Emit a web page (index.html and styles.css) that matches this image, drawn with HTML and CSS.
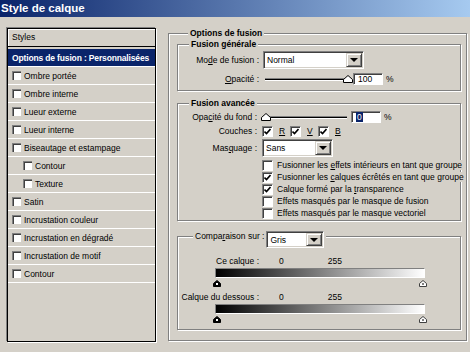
FILE: index.html
```html
<!DOCTYPE html>
<html lang="fr">
<head>
    <meta charset="UTF-8">
    <meta name="viewport" content="width=device-width, initial-scale=1.0">
    <title>Style de calque</title>
    <link rel="stylesheet" href="styles.css">
</head>
<body>
    <div class="titlebar">Style de calque</div>

    <div class="dialog">
        <div class="styles-list">
            <div class="list-head">Styles</div>
            <div class="list-item selected">Options de fusion : Personnalisées</div>
            <div class="list-item"><span class="box"></span>Ombre portée</div>
            <div class="list-item"><span class="box"></span>Ombre interne</div>
            <div class="list-item"><span class="box"></span>Lueur externe</div>
            <div class="list-item"><span class="box"></span>Lueur interne</div>
            <div class="list-item"><span class="box"></span>Biseautage et estampage</div>
            <div class="list-item sub"><span class="box"></span>Contour</div>
            <div class="list-item sub"><span class="box"></span>Texture</div>
            <div class="list-item"><span class="box"></span>Satin</div>
            <div class="list-item"><span class="box"></span>Incrustation couleur</div>
            <div class="list-item"><span class="box"></span>Incrustation en dégradé</div>
            <div class="list-item"><span class="box"></span>Incrustation de motif</div>
            <div class="list-item"><span class="box"></span>Contour</div>
        </div>

        <fieldset class="group outer">
            <legend>Options de fusion</legend>

            <fieldset class="group general">
                <legend>Fusion générale</legend>
                <div class="form-grid">
                    <label>Mo<u>d</u>e de fusion :</label>
                    <div class="select select-mode"><span class="value">Normal</span><span class="drop"></span></div>
                    <label><u>O</u>pacité :</label>
                    <div class="slider-row">
                        <div class="slider">
                            <div class="track"></div>
                            <svg class="thumb" style="left:80px" width="10" height="8" viewBox="0 0 10 8"><path d="M0.5 7.5V4.5L5 0.5L9.5 4.5V7.5Z" fill="#fff" stroke="#000"/></svg>
                        </div>
                        <span class="num">100</span><span class="pct">%</span>
                    </div>
                </div>
            </fieldset>

            <fieldset class="group advanced">
                <legend>Fusion avancée</legend>
                <div class="form-grid narrow">
                    <label>Opa<u>c</u>ité du fond :</label>
                    <div class="slider-row">
                        <div class="slider">
                            <div class="track"></div>
                            <svg class="thumb" style="left:0px" width="10" height="8" viewBox="0 0 10 8"><path d="M0.5 7.5V4.5L5 0.5L9.5 4.5V7.5Z" fill="#fff" stroke="#000"/></svg>
                        </div>
                        <span class="num"><span class="sel">0</span></span><span class="pct">%</span>
                    </div>
                    <label>Couches :</label>
                    <div class="channels">
                        <span class="check checked"><svg width="7" height="7" viewBox="0 0 7 7"><path d="M0.5 3.5L2.5 5.5L6.5 1" fill="none" stroke="#000" stroke-width="1.6"/></svg></span><u>R</u>
                        <span class="check checked"><svg width="7" height="7" viewBox="0 0 7 7"><path d="M0.5 3.5L2.5 5.5L6.5 1" fill="none" stroke="#000" stroke-width="1.6"/></svg></span><u>V</u>
                        <span class="check checked"><svg width="7" height="7" viewBox="0 0 7 7"><path d="M0.5 3.5L2.5 5.5L6.5 1" fill="none" stroke="#000" stroke-width="1.6"/></svg></span><u>B</u>
                    </div>
                    <label>Mas<u>q</u>uage :</label>
                    <div class="select select-mask"><span class="value">Sans</span><span class="drop"></span></div>
                </div>
                <div class="checklist">
                    <div class="check-row"><span class="check"></span><span class="text">Fusionner les <u>e</u>ffets intérieurs en tant que groupe</span></div>
                    <div class="check-row"><span class="check checked"><svg width="7" height="7" viewBox="0 0 7 7"><path d="M0.5 3.5L2.5 5.5L6.5 1" fill="none" stroke="#000" stroke-width="1.6"/></svg></span><span class="text">Fusionner les <u>c</u>alques écrêtés en tant que groupe</span></div>
                    <div class="check-row"><span class="check checked"><svg width="7" height="7" viewBox="0 0 7 7"><path d="M0.5 3.5L2.5 5.5L6.5 1" fill="none" stroke="#000" stroke-width="1.6"/></svg></span><span class="text">Calque formé par la <u>t</u>ransparence</span></div>
                    <div class="check-row"><span class="check"></span><span class="text">Effets masqués par le masque de fusion</span></div>
                    <div class="check-row"><span class="check"></span><span class="text">Effets masqués par le masque vectoriel</span></div>
                </div>
            </fieldset>

            <fieldset class="group compare">
                <legend><span class="legend-text">Compa<u>r</u>aison sur :</span><span class="select select-gray"><span class="value">Gris</span><span class="drop"></span></span></legend>

                <div class="range-label"><span class="range-name">Ce calque :</span><span class="range-min">0</span><span class="range-max">255</span></div>
                <div class="ramp"></div>
                <div class="ramp-thumbs">
                    <svg width="8" height="7" viewBox="0 0 8 7"><path d="M0.5 6.5V3.5L4 0.5L7.5 3.5V6.5Z" fill="#000" stroke="#000"/><rect x="3" y="3" width="2" height="2" fill="#fff"/></svg>
                    <svg width="8" height="7" viewBox="0 0 8 7"><path d="M0.5 6.5V3.5L4 0.5L7.5 3.5V6.5Z" fill="#fff" stroke="#404040"/><rect x="3" y="3" width="2" height="2" fill="#808080"/></svg>
                </div>

                <div class="range-label second"><span class="range-name">Calque du dessous :</span><span class="range-min">0</span><span class="range-max">255</span></div>
                <div class="ramp"></div>
                <div class="ramp-thumbs">
                    <svg width="8" height="7" viewBox="0 0 8 7"><path d="M0.5 6.5V3.5L4 0.5L7.5 3.5V6.5Z" fill="#000" stroke="#000"/><rect x="3" y="3" width="2" height="2" fill="#fff"/></svg>
                    <svg width="8" height="7" viewBox="0 0 8 7"><path d="M0.5 6.5V3.5L4 0.5L7.5 3.5V6.5Z" fill="#fff" stroke="#404040"/><rect x="3" y="3" width="2" height="2" fill="#808080"/></svg>
                </div>
            </fieldset>
        </fieldset>
    </div>
</body>
</html>
```

FILE: styles.css
```css
* {
    box-sizing: border-box;
}
body {
    margin: 0;
    width: 470px;
    height: 352px;
    overflow: hidden;
    background-color: #d4d0c8;
    font-family: "Liberation Sans", Arial, sans-serif;
    font-size: 8.5px;
    color: #000;
}
.titlebar {
    height: 17px;
    line-height: 17px;
    padding-left: 1px;
    background: linear-gradient(to right, #0a246a, #a6caf0);
    color: #fff;
    font-weight: bold;
    font-size: 11.5px;
}
.dialog {
    display: flex;
    align-items: flex-start;
    padding: 11px 0 0 7px;
}

/* liste des styles */
.styles-list {
    width: 149px;
    height: 314px;
    border: 1px solid #000;
    box-shadow: -1px -1px 0 #808080, 1px 1px 0 #fff;
}
.list-head {
    height: 18px;
    line-height: 17px;
    padding-left: 4px;
    border-bottom: 1px solid #000;
    box-shadow: inset 1px 1px 0 #fff;
    margin-bottom: 2px;
}
.list-item {
    display: flex;
    align-items: center;
    height: 18px;
    padding-left: 4px;
    border-bottom: 1px solid #fff;
    white-space: nowrap;
}
.list-item.selected {
    background-color: #0a246a;
    color: #fff;
    font-weight: bold;
    letter-spacing: -0.15px;
}
.list-item.sub {
    padding-left: 15px;
}
.box {
    width: 9px;
    height: 9px;
    margin-right: 3px;
    background-color: #fff;
    border-top: 1px solid #808080;
    border-left: 1px solid #808080;
    box-shadow: inset 1px 1px 0 #404040;
}

/* cadres */
fieldset.group {
    margin: 0;
    padding: 0;
    min-width: 0;
    border: 1px solid #808080;
    box-shadow: inset 1px 1px 0 #fff, 1px 1px 0 #fff;
}
fieldset.group legend {
    margin-left: 11px;
    padding: 0 2px;
    line-height: 11px;
    font-weight: bold;
    background-color: #d4d0c8;
}
.outer {
    width: 299px;
    margin-left: 12px !important;
    padding: 0 5px 10px 8px !important;
}
.general {
    padding: 1px 0 5px !important;
}
.advanced {
    margin-top: 7px !important;
    padding: 2px 0 1px !important;
}
.compare {
    margin-top: 4px !important;
    padding: 8px 0 6px !important;
}
.compare legend {
    display: flex;
    align-items: flex-start;
    margin-left: 15px !important;
    padding-top: 6px !important;
    font-weight: normal !important;
}
.legend-text {
    line-height: 11px;
    margin-right: 2px;
}

/* formulaires */
.form-grid {
    display: grid;
    grid-template-columns: 81px 1fr;
    column-gap: 4px;
    row-gap: 4px;
    align-items: center;
}
.form-grid.narrow {
    grid-template-columns: 79px 1fr;
    row-gap: 2px;
}
.form-grid label {
    text-align: right;
    white-space: nowrap;
}
.select {
    display: flex;
    height: 18px;
    background-color: #fff;
    border: 1px solid;
    border-color: #808080 #fff #fff #808080;
    box-shadow: inset 1px 1px 0 #404040, inset -1px -1px 0 #d4d0c8;
    padding: 1px;
}
.select .value {
    flex: 1;
    padding-left: 2px;
    line-height: 14px;
}
.select .drop {
    display: flex;
    align-items: center;
    justify-content: center;
    width: 16px;
    background-color: #d4d0c8;
    border: 1px solid;
    border-color: #d4d0c8 #404040 #404040 #d4d0c8;
    box-shadow: inset 1px 1px 0 #fff, inset -1px -1px 0 #808080;
}
.select .drop::after {
    content: "";
    border-left: 4px solid transparent;
    border-right: 4px solid transparent;
    border-top: 4px solid #000;
}
.select-mode {
    width: 101px;
}
.select-mask {
    width: 71px;
    margin-left: 1px;
}
.select-gray {
    width: 58px;
    height: 17px;
}
.slider-row {
    display: flex;
    align-items: center;
    height: 12px;
}
.slider {
    position: relative;
    width: 86px;
    height: 12px;
}
.track {
    width: 84px;
    height: 3px;
    margin: 5px 0 0 2px;
    background-color: #000;
    border-top: 1px solid #808080;
    border-bottom: 1px solid #fff;
}
.thumb {
    position: absolute;
    top: 2px;
}
.num {
    width: 30px;
    height: 12px;
    margin-left: 4px;
    padding-left: 4px;
    line-height: 10px;
    background-color: #fff;
    border: 1px solid;
    border-color: #808080 #fff #fff #808080;
    box-shadow: inset 1px 1px 0 #404040;
}
.num .sel {
    display: inline-block;
    background-color: #0a246a;
    color: #fff;
    padding: 0 1px;
}
.pct {
    margin-left: 3px;
}
.channels {
    display: flex;
    align-items: center;
    height: 12px;
    margin-left: 1px;
}
.channels u {
    width: 11px;
    margin-left: 6px;
}
.check {
    display: flex;
    align-items: center;
    justify-content: center;
    width: 11px;
    height: 11px;
    flex-shrink: 0;
    background-color: #fff;
    border: 1px solid;
    border-color: #808080 #fff #fff #808080;
    box-shadow: inset 1px 1px 0 #404040;
}
.checklist {
    margin: 2px 0 0 84px;
}
.check-row {
    display: flex;
    align-items: center;
    height: 12px;
    white-space: nowrap;
}
.check-row .text {
    margin-left: 4px;
    background-color: #d4d0c8;
}

/* comparaison */
.range-label {
    display: flex;
    line-height: 11px;
}
.range-label.second {
    margin-top: 5px;
}
.range-name {
    width: 81px;
    text-align: right;
}
.range-min {
    margin-left: 20px;
}
.range-max {
    margin-left: 44px;
}
.ramp {
    width: 210px;
    height: 10px;
    margin: 1px 0 0 37px;
    background: linear-gradient(to right, #000, #fff);
    border: 1px solid;
    border-color: #808080 #fff #fff #808080;
}
.ramp-thumbs {
    display: flex;
    justify-content: space-between;
    width: 214px;
    height: 7px;
    margin: 2px 0 0 35px;
}
.ramp-thumbs svg {
    display: block;
}
```
